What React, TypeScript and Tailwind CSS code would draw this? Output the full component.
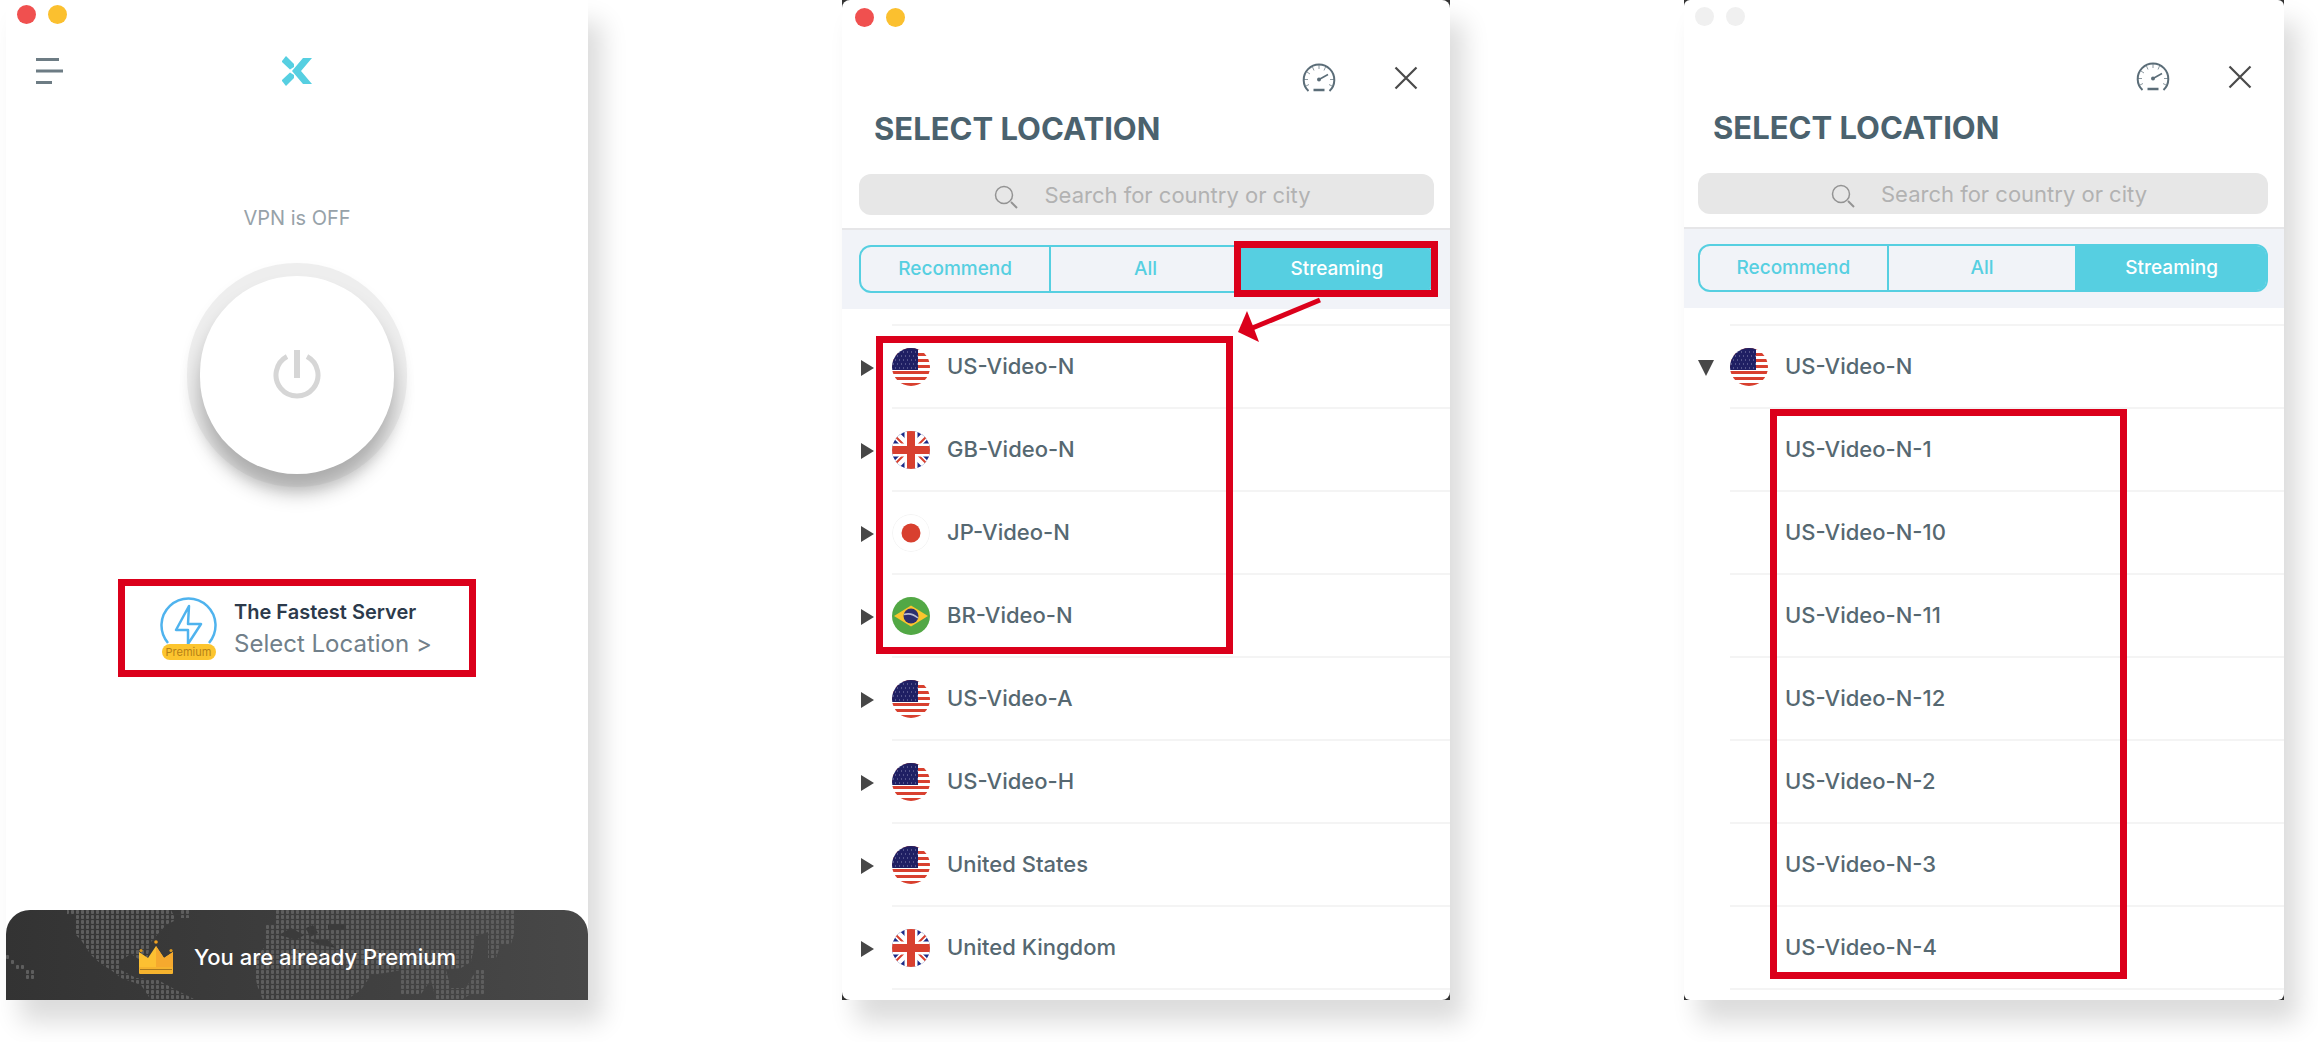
import { ReactNode } from 'react';

type Country = 'us' | 'gb' | 'jp' | 'br';

type ServerGroup = { name: string; country: Country };

const highlightedGroups: ServerGroup[] = [
  { name: 'US-Video-N', country: 'us' },
  { name: 'GB-Video-N', country: 'gb' },
  { name: 'JP-Video-N', country: 'jp' },
  { name: 'BR-Video-N', country: 'br' }
];

const otherGroups: ServerGroup[] = [
  { name: 'US-Video-A', country: 'us' },
  { name: 'US-Video-H', country: 'us' },
  { name: 'United States', country: 'us' },
  { name: 'United Kingdom', country: 'gb' }
];

const usServers = ['US-Video-N-1', 'US-Video-N-10', 'US-Video-N-11', 'US-Video-N-12', 'US-Video-N-2', 'US-Video-N-3', 'US-Video-N-4'];

const tabs = ['Recommend', 'All', 'Streaming'];

function FlagArt({ country }: { country: Country }) {
  if (country === 'us') {
    return (
      <>
        <rect width="38" height="38" fill="#fff" />
        {[0, 6, 12, 18, 24, 30, 36].map((y) => (
          <rect key={y} y={y - 1} width="38" height="3" fill="#d8402f" />
        ))}
        <rect width="26" height="22" fill="#1f1f63" />
        {[4, 8, 12, 16, 20].map((y) => (
          <line key={y} x1={y % 8 === 0 ? 1 : 3} x2="26" y1={y} y2={y} stroke="#8a8ab4" strokeWidth="1" strokeDasharray="1 3" />
        ))}
      </>
    );
  }
  if (country === 'gb') {
    return (
      <>
        <rect width="38" height="38" fill="#1b2a87" />
        <path d="M0 0 38 38M38 0 0 38" stroke="#fff" strokeWidth="8" />
        <path d="M0 2 17 19M21 19 38 2M0 36 17 19M21 19 38 36" stroke="#d8402f" strokeWidth="2" />
        <path d="M19 0v38M0 19h38" stroke="#fff" strokeWidth="13" />
        <path d="M19 0v38M0 19h38" stroke="#d8402f" strokeWidth="8" />
      </>
    );
  }
  if (country === 'jp') {
    return (
      <>
        <circle cx="19" cy="19" r="18.5" fill="#fff" stroke="#f4f4f4" />
        <circle cx="19" cy="19" r="9.5" fill="#d8402f" />
      </>
    );
  }
  return (
    <>
      <rect width="38" height="38" fill="#52a845" />
      <path d="M2 19 19 8.5 36 19 19 29.5Z" fill="#fbc52d" />
      <circle cx="19" cy="19" r="7.5" fill="#2e2f6e" />
      <path d="M12 17.5c5-1.5 10 0 14 3.5" fill="none" stroke="#b9bad2" strokeWidth="1.5" />
    </>
  );
}

function Flag({ country }: { country: Country }) {
  return (
    <svg viewBox="0 0 38 38" className="size-[38px] shrink-0 overflow-hidden rounded-full" aria-hidden="true">
      <FlagArt country={country} />
    </svg>
  );
}

function WindowDots({ active = true }: { active?: boolean }) {
  return (
    <div className="flex gap-3">
      <span className={`size-[19px] rounded-full ${active ? 'bg-[#f0504f]' : 'bg-[#f0f0f0]'}`} />
      <span className={`size-[19px] rounded-full ${active ? 'bg-[#fbc02f]' : 'bg-[#f0f0f0]'}`} />
    </div>
  );
}

function GaugeIcon() {
  return (
    <svg viewBox="0 0 34 30" className="h-[30px] w-[34px]" fill="none" stroke="#5b6d78" aria-hidden="true">
      <path d="M6.5 28A15.3 15.3 0 1 1 27.500 28" strokeWidth="2" />
      <path d="M11.5 27h11" strokeWidth="2.5" />
      <path d="M17 16.5 26 11.500" strokeWidth="1.5" />
      <circle cx="17" cy="16.5" r="2" fill="#5b6d78" stroke="none" />
      <path d="M17 2v4M10.500 4l1.500 3.500M23.500 4 22 7.500M5 9l3 2M2 16.500h4M28 16.500h4M4 23l3-1.500M30 23l-3-1.500" strokeWidth="1" strokeOpacity="0.7" />
    </svg>
  );
}

function CloseIcon() {
  return (
    <svg viewBox="0 0 24 24" className="size-6" fill="none" stroke="#4a4a4a" strokeWidth="2.2" aria-hidden="true">
      <path d="M1.500 1.500 22.500 22.500M22.500 1.500 1.500 22.500" />
    </svg>
  );
}

function SearchIcon() {
  return (
    <svg viewBox="0 0 24 24" className="mt-1 size-6 shrink-0" fill="none" stroke="#939393" strokeWidth="1.5" aria-hidden="true">
      <circle cx="10" cy="10" r="8.5" />
      <path d="m17 17 6 6" strokeWidth="2" />
    </svg>
  );
}

function WorldDots() {
  return (
    <svg viewBox="0 0 582 90" preserveAspectRatio="none" className="absolute inset-0 size-full" aria-hidden="true">
      <defs>
        <pattern id="dots" width="5" height="5" patternUnits="userSpaceOnUse">
          <rect width="3" height="4" rx="1" fill="#5e5e5e" />
        </pattern>
      </defs>
      <g fill="url(#dots)">
        <path d="M61 0H165L170 10 160 15 152 24 145 32 140 54 125 44 115 50 115 60 130 68 152 70 170 80 190 90H145L135 75 115 68 105 60 95 54 85 45 75 30 70 25V5H61Z" />
        <path d="M175 0h10v8h-10Z" />
        <path d="M270 0H510V18L505 34H495L490 48H482V22L470 26 465 52 455 58 440 60 445 78H460L470 60H480V84H465L455 90H430L425 70 415 84H395L395 60 385 62 365 65 355 80 340 90H285L272 90H257L252 78 248 62 250 46 258 38V15H270Z" />
        <path d="M0 45h5v5H0ZM5 50h5v5H5ZM10 55h10v5H10ZM20 60h10v10H20Z" />
      </g>
      <g fill="#3b3b3b">
        <path d="M273 25 285 18 298 25 290 30ZM300 18l7-3 5 8-8 4ZM322 14h18v6h-18ZM302 30h20l8 8-16-3Z" />
      </g>
    </svg>
  );
}

function CrownIcon() {
  return (
    <svg viewBox="0 0 36 35" className="h-[35px] w-9 shrink-0" aria-hidden="true">
      <path d="M1 12 10 18 18 6 26 18 35 12V29H1Z" fill="#fcc032" />
      <path d="M18 6 26 18 35 12V29H18Z" fill="#f5a92e" />
      <rect x="1" y="27" width="34" height="7" rx="1" fill="#f5b32e" />
      <path d="M2 29.5h32" stroke="#a8781f" />
      <circle cx="18" cy="2" r="1.8" fill="#f0a020" />
      <circle cx="3" cy="10.5" r="1.6" fill="#d99820" />
      <circle cx="33" cy="10.5" r="1.6" fill="#d99820" />
    </svg>
  );
}

function HomePanel() {
  return (
    <section className="mr-5 flex min-w-0 flex-[582] flex-col bg-white shadow-[14px_22px_24px_rgba(0,0,0,0.14)]">
      <div className="px-[11px] pt-[5px]">
        <WindowDots />
      </div>
      <header className="mt-8 grid grid-cols-3 items-center px-[30px]">
        <button type="button" aria-label="Menu" className="justify-self-start">
          <svg viewBox="0 0 28 28" className="size-7" stroke="#6d7c84" strokeWidth="3" aria-hidden="true">
            <path d="M0 2.500h23M0 14h27M0 25.500h16" />
          </svg>
        </button>
        <svg viewBox="0 0 30 30" className="size-[30px] justify-self-center" fill="#56cfe1" aria-hidden="true">
          <path d="M0 5 4 0 12 8V11L8 13.500 0 6Z" />
          <path d="M0 25 4 30 12 22V19L8 16.500 0 24Z" />
          <path d="M21 2H30L19 15 30 28H21L10 15Z" />
        </svg>
      </header>

      <p className="mt-[118px] text-center text-[20px] leading-7 text-[#97a2a9]">VPN is OFF</p>
      <button type="button" aria-label="Connect" className="mx-auto mt-[31px] h-[224px] w-[220px] rounded-full bg-[#eeeeee] p-[13px] shadow-[0_4px_12px_rgba(0,0,0,0.04)]">
        <span className="flex size-full items-center justify-center rounded-full bg-white shadow-[0_18px_20px_rgba(0,0,0,0.28)]">
          <svg viewBox="0 0 48 52" className="h-[52px] w-12" fill="none" stroke="#d6d6d6" strokeWidth="5" aria-hidden="true">
            <path d="M14 7.5A21 21 0 1 0 34 7.5" />
            <path d="M24 1v28" strokeWidth="6" />
          </svg>
        </span>
      </button>

      <button type="button" className="mx-auto mt-[92px] flex h-[98px] w-[358px] items-center gap-[17px] border-[7px] border-[#db001b] pl-[35px] text-left">
        <span className="flex w-[57px] shrink-0 flex-col items-center">
          <svg viewBox="0 0 57 48" className="h-12 w-[57px]" fill="none" stroke="#4fb3ee" strokeWidth="2.5" aria-hidden="true">
            <path d="M8 47A27 27 0 1 1 49 47" />
            <path d="M29 10 16 34H28V48L41 28H28Z" strokeLinejoin="round" />
          </svg>
          <span className="w-[54px] rounded-full bg-[#fcc52f] text-center text-[11px] leading-4 text-[#b58117]">Premium</span>
        </span>
        <span className="pt-1 whitespace-nowrap">
          <span className="block text-[20px] leading-7 font-semibold text-[#2c3a4b]">The Fastest Server</span>
          <span className="block text-[24px] leading-9 text-[#71808a]">Select Location &gt;</span>
        </span>
      </button>

      <footer className="relative mt-auto flex h-[90px] items-center justify-center overflow-hidden rounded-t-3xl bg-gradient-to-r from-[#333333] to-[#484848] pt-1 text-[22px] font-medium text-white">
        <WorldDots />
        <span className="relative flex items-center gap-5">
          <CrownIcon />
          You are already Premium
        </span>
      </footer>
    </section>
  );
}

function LocationHeader({ active, tabHighlight }: { active: boolean; tabHighlight?: ReactNode }) {
  return (
    <>
      <div className={active ? 'px-[13px] pt-2' : 'px-[11px] pt-[7px]'}>
        <WindowDots active={active} />
      </div>
      <div className="mt-9 flex items-center justify-end gap-[58px] pr-8">
        <button type="button" aria-label="Speed test"><GaugeIcon /></button>
        <button type="button" aria-label="Close"><CloseIcon /></button>
      </div>
      <h2 className={`mt-4 text-[31px] leading-10 font-bold text-[#4b626e] ${active ? 'pl-8' : 'pl-[29px]'}`}>SELECT LOCATION</h2>
      <div className={`mt-[25px] pr-4 ${active ? 'pl-[17px]' : 'pl-[14px]'}`}>
        <label className="flex h-[41px] items-center justify-center gap-[26px] rounded-xl bg-[#e7e7e7] pl-3">
          <SearchIcon />
          <input type="text" aria-label="Search for country or city" placeholder="Search for country or city" className="field-sizing-content bg-transparent text-[22px] leading-7 outline-none placeholder:text-[#b2b2b2]" />
        </label>
      </div>
      <div className={`mt-[13px] border-t-2 border-[#e6e6e8] bg-[#f1f3f8] pt-[15px] pr-4 pb-4 ${active ? 'pl-[17px]' : 'pl-[14px]'}`}>
        <div className="relative grid h-12 grid-cols-3 rounded-xl border-2 border-[#56cfe1] text-[19px] font-medium">
          {tabs.map((tab, index) => (
            <button
              key={tab}
              type="button"
              className={index === 2 ? 'rounded-r-[9px] bg-[#56cfe1] text-white' : 'border-r-2 border-[#56cfe1] text-[#56cfe1]'}
            >
              {tab}
            </button>
          ))}
          {tabHighlight}
        </div>
      </div>
    </>
  );
}

function GroupRow({ group, open = false }: { group: ServerGroup; open?: boolean }) {
  return (
    <li className="flex h-[83px] items-center">
      <button type="button" aria-expanded={open} className="flex h-full w-full items-center text-left">
        <svg viewBox="0 0 16 18" className="mr-4 h-[18px] w-4" fill="#474747" aria-hidden="true">
          <path d={open ? 'M0 1H16L8 17Z' : 'M1 1 14 9 1 17Z'} />
        </svg>
        <span className="flex h-full flex-1 items-center gap-[17px] border-b-2 border-[#f4f4f4]">
          <Flag country={group.country} />
          {group.name}
        </span>
      </button>
    </li>
  );
}

function StreamingPanel() {
  return (
    <section className="min-w-0 flex-[608] bg-[#333] shadow-[14px_22px_24px_rgba(0,0,0,0.14)]">
      <div className="h-full rounded-lg bg-white pb-[10px]">
        <LocationHeader
          active
          tabHighlight={
            <>
              <span className="absolute -top-[6px] -right-[6px] h-14 w-[204px] border-[7px] border-[#db001b]" />
              <svg viewBox="0 0 84 46" className="absolute top-[50px] right-[110px] z-10 h-[46px] w-[84px]" aria-hidden="true">
                <path d="M82 3 12 32" stroke="#db001b" strokeWidth="5" />
                <path d="M0 35 9 14 15 29 21 45Z" fill="#db001b" />
              </svg>
            </>
          }
        />
        <div className="pl-[18px] text-[22px] font-medium text-[#566871]">
          <div className="ml-8 h-[17px] border-b-2 border-[#f4f4f4]" />
          <div className="relative">
            <ul>
              {highlightedGroups.map((group) => <GroupRow key={group.name} group={group} />)}
            </ul>
            <span className="absolute top-[10px] bottom-1 left-4 w-[357px] border-[7px] border-[#db001b]" />
          </div>
          <ul>
            {otherGroups.map((group) => <GroupRow key={group.name} group={group} />)}
          </ul>
        </div>
      </div>
    </section>
  );
}

function ServersPanel() {
  return (
    <section className="min-w-0 flex-[600] bg-[#333] shadow-[14px_22px_24px_rgba(0,0,0,0.14)]">
      <div className="h-full rounded-md bg-white pb-[10px]">
        <LocationHeader active={false} />
        <div className="pl-[14px] text-[22px] font-medium text-[#566871]">
          <div className="ml-8 h-[18px] border-b-2 border-[#f4f4f4]" />
          <ul>
            <GroupRow group={highlightedGroups[0]} open />
          </ul>
          <div className="relative">
            <ul>
              {usServers.map((server) => (
                <li key={server} className="ml-8 h-[83px] border-b-2 border-[#f4f4f4]">
                  <button type="button" className="h-full w-full pl-[55px] text-left">{server}</button>
                </li>
              ))}
            </ul>
            <span className="absolute top-0 bottom-[11px] left-[72px] w-[357px] border-[7px] border-[#db001b]" />
          </div>
        </div>
      </div>
    </section>
  );
}

export default function App() {
  return (
    <main className="flex gap-[234px] overflow-hidden bg-white pr-[34px] pb-[42px] pl-1.5 font-['Inter','Liberation_Sans',sans-serif]">
      <HomePanel />
      <StreamingPanel />
      <ServersPanel />
    </main>
  );
}
